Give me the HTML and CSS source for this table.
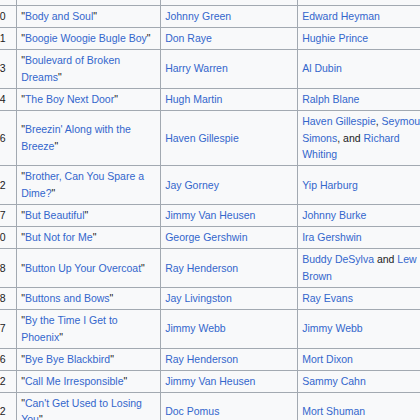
FILE: index.html
```html
<!DOCTYPE html>
<html lang="en">
<head>
<meta charset="utf-8">
<title>Songs</title>
<link rel="stylesheet" href="styles.css">
</head>
<body>
<table class="wikitable">
<colgroup>
<col class="c-year">
<col class="c-song">
<col class="c-comp">
<col class="c-lyr">
</colgroup>
<tbody>
<tr><td>1926</td><td>"<a href="#">Blue Room</a>"</td><td><a href="#">Richard Rodgers</a></td><td><a href="#">Lorenz Hart</a></td></tr>
<tr><td>1930</td><td>"<a href="#">Body and Soul</a>"</td><td><a href="#">Johnny Green</a></td><td><a href="#">Edward Heyman</a></td></tr>
<tr><td>1941</td><td>"<a href="#">Boogie Woogie Bugle Boy</a>"</td><td><a href="#">Don Raye</a></td><td><a href="#">Hughie Prince</a></td></tr>
<tr><td>1933</td><td>"<a href="#">Boulevard of Broken Dreams</a>"</td><td><a href="#">Harry Warren</a></td><td><a href="#">Al Dubin</a></td></tr>
<tr><td>1944</td><td>"<a href="#">The Boy Next Door</a>"</td><td><a href="#">Hugh Martin</a></td><td><a href="#">Ralph Blane</a></td></tr>
<tr><td>1926</td><td>"<a href="#">Breezin' Along with the Breeze</a>"</td><td><a href="#">Haven Gillespie</a></td><td><a href="#">Haven Gillespie</a>, <a href="#">Seymour Simons</a>, and <a href="#">Richard Whiting</a></td></tr>
<tr><td>1932</td><td>"<a href="#">Brother, Can You Spare a Dime?</a>"</td><td><a href="#">Jay Gorney</a></td><td><a href="#">Yip Harburg</a></td></tr>
<tr><td>1947</td><td>"<a href="#">But Beautiful</a>"</td><td><a href="#">Jimmy Van Heusen</a></td><td><a href="#">Johnny Burke</a></td></tr>
<tr><td>1930</td><td>"<a href="#">But Not for Me</a>"</td><td><a href="#">George Gershwin</a></td><td><a href="#">Ira Gershwin</a></td></tr>
<tr><td>1928</td><td>"<a href="#">Button Up Your Overcoat</a>"</td><td><a href="#">Ray Henderson</a></td><td><a href="#">Buddy DeSylva</a> and <a href="#">Lew Brown</a></td></tr>
<tr><td>1948</td><td>"<a href="#">Buttons and Bows</a>"</td><td><a href="#">Jay Livingston</a></td><td><a href="#">Ray Evans</a></td></tr>
<tr><td>1967</td><td>"<a href="#">By the Time I Get to Phoenix</a>"</td><td><a href="#">Jimmy Webb</a></td><td><a href="#">Jimmy Webb</a></td></tr>
<tr><td>1926</td><td>"<a href="#">Bye Bye Blackbird</a>"</td><td><a href="#">Ray Henderson</a></td><td><a href="#">Mort Dixon</a></td></tr>
<tr><td>1962</td><td>"<a href="#">Call Me Irresponsible</a>"</td><td><a href="#">Jimmy Van Heusen</a></td><td><a href="#">Sammy Cahn</a></td></tr>
<tr><td>1962</td><td>"<a href="#">Can't Get Used to Losing You</a>"</td><td><a href="#">Doc Pomus</a></td><td><a href="#">Mort Shuman</a></td></tr>
</tbody>
</table>
</body>
</html>
```
FILE: styles.css
```css
html, body {
  margin: 0;
  padding: 0;
  background: #ffffff;
  overflow: hidden;
}

.wikitable {
  border-collapse: collapse;
  table-layout: fixed;
  width: 460px;
  margin: -17px 0 0 -23px;
  background: #f8f9fa;
  color: #202122;
  font-family: "Liberation Sans", Arial, sans-serif;
  font-size: 10.5px;
  line-height: 16.8px;
}

.c-year { width: 39px; }
.c-song { width: 144px; }
.c-comp { width: 137px; }
.c-lyr { width: 140px; }

.wikitable td {
  border: 1px solid #a2a9b1;
  padding: 2.1px 4.2px;
  vertical-align: middle;
  text-align: left;
}

.wikitable a {
  color: #3366cc;
  text-decoration: none;
}
```
